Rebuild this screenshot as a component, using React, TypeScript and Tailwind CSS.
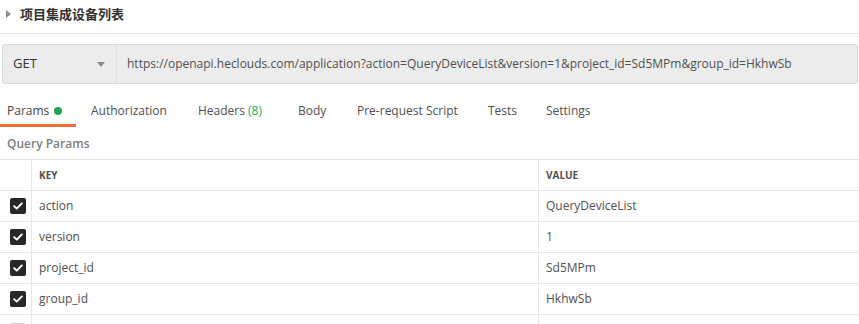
import React from "react";

const rows = [
  { k: "action", v: "QueryDeviceList" },
  { k: "version", v: "1" },
  { k: "project_id", v: "Sd5MPm" },
  { k: "group_id", v: "HkhwSb" },
];

function Check({ on = true }: { on?: boolean }) {
  if (!on)
    return <div className="w-[16px] h-[16px] rounded-[2px] border border-[#d0d0d0] bg-white" />;
  return (
    <div className="w-[16px] h-[16px] rounded-[2px] bg-[#282828] flex items-center justify-center">
      <svg width="10" height="8" viewBox="0 0 10 8">
        <path d="M1.2 4.2 L3.8 6.6 L8.8 1.4" fill="none" stroke="#fff" strokeWidth="1.9" strokeLinecap="round" strokeLinejoin="round" />
      </svg>
    </div>
  );
}

export default function App() {
  const font = { fontFamily: '"Open Sans", "Noto Sans CJK SC", sans-serif' };
  return (
    <div className="w-[859px] h-[324px] bg-white overflow-hidden text-[#505050]" style={font}>
      {/* title */}
      <div className="h-[34px] border-b border-[#e6e6e6] flex items-start pt-[5px] pl-[6px]">
        <div className="mt-[5px] w-0 h-0 border-y-[4px] border-y-transparent border-l-[5px] border-l-[#8a8a8a]" />
        <div className="ml-[9px] text-[13px] leading-[18px] font-bold text-[#333]" style={{ fontFamily: '"Noto Sans CJK SC", sans-serif' }}>
          项目集成设备列表
        </div>
      </div>

      {/* url bar */}
      <div className="mt-[10px] ml-[2px] mr-[1px] h-[40px] border border-[#dcdcdc] rounded-[3px] bg-[#ececec] flex">
        <div className="w-[114px] border-r border-[#dcdcdc] flex items-center justify-between pl-[10px] pr-[11px]">
          <span className="text-[13px] text-[#333]">GET</span>
          <div className="w-0 h-0 border-x-[4px] border-x-transparent border-t-[5px] border-t-[#8a8a8a]" />
        </div>
        <div className="flex items-center pl-[10px] text-[12px] text-[#505050] whitespace-nowrap">
          https://openapi.heclouds.com/application?action=QueryDeviceList&amp;version=1&amp;project_id=Sd5MPm&amp;group_id=HkhwSb
        </div>
      </div>

      {/* tabs */}
      <div className="flex pt-[18px] text-[12px] whitespace-nowrap">
        <div className="w-[76px] pl-[7px] leading-[18px] pb-[4px] border-b-[3px] border-[#f26b3a] text-[#444] flex items-center">
          Params<span className="ml-[5px] w-[8px] h-[8px] rounded-full bg-[#1ea550] inline-block" />
        </div>
        <div className="ml-[15px] w-[107px] leading-[18px]">Authorization</div>
        <div className="w-[100px] leading-[18px]">
          Headers <span className="text-[#26a95f]">(8)</span>
        </div>
        <div className="w-[59px] leading-[18px]">Body</div>
        <div className="w-[131px] leading-[18px]">Pre-request Script</div>
        <div className="w-[58px] leading-[18px]">Tests</div>
        <div className="leading-[18px]">Settings</div>
      </div>

      {/* query params */}
      <div className="pt-[8px] pl-[7px] text-[12px] leading-[18px] font-semibold text-[#808080]">Query Params</div>

      {/* table */}
      <div className="mt-[6px] border-t border-[#e6e6e6] grid grid-cols-[32px_507px_1fr] text-[12px]">
        <div className="h-[31px] border-r border-b border-[#e6e6e6]" />
        <div className="h-[31px] border-r border-b border-[#e6e6e6] flex items-center pl-[7px] text-[10px] font-bold text-[#505050]">KEY</div>
        <div className="h-[31px] border-b border-[#e6e6e6] flex items-center pl-[7px] text-[10px] font-bold text-[#505050]">VALUE</div>
        {rows.map((r) => (
          <React.Fragment key={r.k}>
            <div className="h-[31px] border-r border-b border-[#e6e6e6] flex items-center justify-end pr-[5px]">
              <Check />
            </div>
            <div className="h-[31px] border-r border-b border-[#e6e6e6] flex items-center pl-[7px]">{r.k}</div>
            <div className="h-[31px] border-b border-[#e6e6e6] flex items-center pl-[7px]">{r.v}</div>
          </React.Fragment>
        ))}
        <div className="h-[31px] border-r border-[#e6e6e6] flex items-start justify-end pr-[5px] pt-[8px]">
          <Check on={false} />
        </div>
        <div className="h-[31px] border-r border-[#e6e6e6]" />
        <div className="h-[31px]" />
      </div>
    </div>
  );
}
